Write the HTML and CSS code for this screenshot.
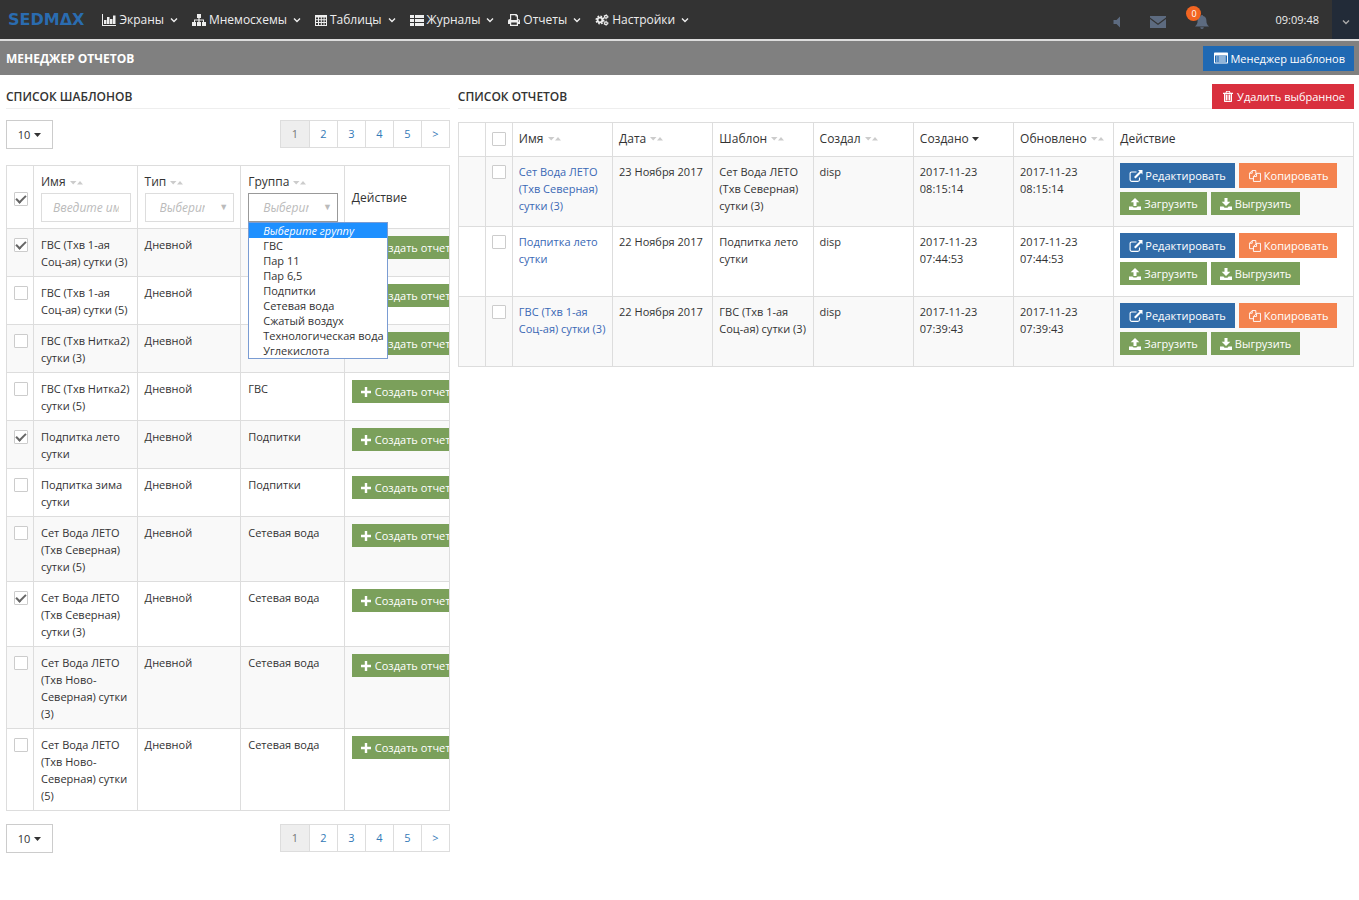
FILE: index.html
```html
<!DOCTYPE html>
<html lang="ru">
<head>
    <meta charset="UTF-8">
    <meta name="viewport" content="width=device-width, initial-scale=1.0">
    <title>SEDMAX - Менеджер отчетов</title>
    <link rel="stylesheet" href="styles.css">
</head>
<body>
    <!-- Icons -->
    <svg class="sprite" aria-hidden="true">
        <symbol id="i-chart" viewBox="0 0 14 12"><path d="M0 0h1v11h13v1H0zM2 6h2.500v4H2zM5 3h2.500v7H5zM8 5h2.500v5H8zM11 1.500h2.500V10H11z"/></symbol>
        <symbol id="i-tree" viewBox="0 0 14 12"><path d="M5 0h4v4H7.600v1.500H12V8h2v4h-4V8h1V6.500H7.600V8H9v4H5V8h1.400V6.500H3V8h1v4H0V8h2V5.500h4.400V4H5z"/></symbol>
        <symbol id="i-grid" viewBox="0 0 12 12"><path fill-rule="evenodd" d="M0 1h12v11H0zM1 3.500v1.800h2V3.500zM4 3.500v1.800h1.800V3.500zM6.800 3.500v1.800h1.800V3.500zM9.500 3.500v1.800H11V3.500zM1 6.200V8h2V6.200zM4 6.200V8h1.800V6.200zM6.800 6.200V8h1.800V6.200zM9.500 6.200V8H11V6.200zM1 9v2h2V9zM4 9v2h1.800V9zM6.800 9v2h1.800V9zM9.500 9v2H11V9z"/></symbol>
        <symbol id="i-list" viewBox="0 0 14 12"><path d="M0 1h4v3H0zM5 1h9v3H5zM0 5h4v3H0zM5 5h9v3H5zM0 9h4v3H0zM5 9h9v3H5z"/></symbol>
        <symbol id="i-print" viewBox="0 0 12 12"><path fill-rule="evenodd" d="M2 0h6.500L10 1.500V5c1.200 0 2 .8 2 2v3h-2v2H2v-2H0V7c0-1.200.8-2 2-2zM3.200 1.200V6h5.600V2.500H7.500V1.200zM3.200 8.500v2.300h5.600V8.500zM10 6.500v1h1v-1z"/></symbol>
        <symbol id="i-cogs" viewBox="0 0 14 13">
            <circle cx="4.800" cy="6.500" r="2.600" fill="none" stroke="currentColor" stroke-width="2"/>
            <circle cx="4.800" cy="6.500" r="4.100" fill="none" stroke="currentColor" stroke-width="1.600" stroke-dasharray="1.800 1.420"/>
            <circle cx="11.300" cy="3" r="1.500" fill="none" stroke="currentColor" stroke-width="1.400"/>
            <circle cx="11.300" cy="3" r="2.300" fill="none" stroke="currentColor" stroke-width=".8" stroke-dasharray="1.200"/>
            <circle cx="11.300" cy="10" r="1.500" fill="none" stroke="currentColor" stroke-width="1.400"/>
            <circle cx="11.300" cy="10" r="2.300" fill="none" stroke="currentColor" stroke-width=".8" stroke-dasharray="1.200"/>
        </symbol>
        <symbol id="i-down" viewBox="0 0 8 6"><path d="M1 1.500l3 3 3-3" fill="none" stroke="currentColor" stroke-width="1.400"/></symbol>
        <symbol id="i-volume" viewBox="0 0 8 12"><path d="M7 .5v11L3.500 8H.5V4h3z"/></symbol>
        <symbol id="i-mail" viewBox="0 0 16 12"><path d="M0 0h16v1.500L8 7.500 0 1.500zM0 3l8 6 8-6v9H0z"/></symbol>
        <symbol id="i-bell" viewBox="0 0 16 16"><path d="M8 0c.7 0 1.200.5 1.200 1.200C11.600 1.800 13 3.700 13 6c0 3.800 1 5.500 3 7H0c2-1.500 3-3.200 3-7 0-2.300 1.400-4.200 3.800-4.800C6.800.5 7.300 0 8 0zM6 14h4c0 1.200-.9 2-2 2s-2-.8-2-2z"/></symbol>
        <symbol id="i-card" viewBox="0 0 14 11"><path fill-rule="evenodd" d="M1 0h12c.6 0 1 .4 1 1v9c0 .6-.4 1-1 1H1c-.6 0-1-.4-1-1V1c0-.6.400-1 1-1zM1 3v7h12V3zM2.200 4h1.300v1H2.200zM4.500 4h7.300v1H4.500zM2.200 6h1.300v1H2.200zM4.500 6h7.300v1H4.500zM2.200 8h1.300v1H2.200zM4.500 8h7.300v1H4.500z"/></symbol>
        <symbol id="i-trash" viewBox="0 0 10 11"><path fill-rule="evenodd" d="M3.200 0h3.600l.7 1.700H10v1.200H9V10c0 .6-.4 1-1 1H2c-.6 0-1-.4-1-1V2.900H0V1.700h2.500zM3.900.8l-.4.900h3l-.4-.9zM2.400 3v7h5.200V3zM3 3.500h1v6H3zM4.500 3.500h1v6h-1zM6 3.500h1v6H6z"/></symbol>
        <symbol id="i-plus" viewBox="0 0 10 10"><path d="M3.800 0h2.400v3.800H10v2.400H6.200V10H3.800V6.200H0V3.800h3.800z"/></symbol>
        <symbol id="i-edit" viewBox="0 0 13 12"><path d="M7 2H2.200Q.6 2 .6 3.600v6.200q0 1.600 1.600 1.600h6.200q1.600 0 1.600-1.600V7.500" fill="none" stroke="currentColor" stroke-width="1.100"/><path d="M8.500 0H13v4.500l-1.500-1.500-5.500 5.500-1.500-1.500L10 1.500z"/></symbol>
        <symbol id="i-copy" viewBox="0 0 13 13"><path d="M3.500.6H7.400V4M3.500.6L.6 3.500v5.900h4.200M3.500.6v2.900H.6M8.200 3.600h4.200v8.800H4.800V7zM8.200 3.600V7H4.800" fill="none" stroke="currentColor" stroke-width="1"/></symbol>
        <symbol id="i-upload" viewBox="0 0 12 12"><path d="M6 0l4.300 4.300H7.500V8h-3V4.300H1.700zM0 8.500h3.500q.5 1 1.500 1h2q1 0 1.500-1H12V12H0z"/></symbol>
        <symbol id="i-download" viewBox="0 0 12 12"><path d="M4.500 0h3v3.700h2.800L6 8 1.700 3.700h2.800zM0 8.500h3.500q.5 1.200 1.500 1.200h2q1 0 1.500-1.200H12V12H0z"/></symbol>
        <symbol id="i-sort" viewBox="0 0 13 4"><path d="M0 0h6.500L3.200 3.500zM7 3.500L10 0l3 3.500z"/></symbol>
        <symbol id="i-caret" viewBox="0 0 7 4"><path d="M0 0h7L3.500 4z"/></symbol>
    </svg>

    <header class="navbar">
        <a class="logo" href="#">SEDMΔX</a>
        <nav class="menu">
            <a href="#"><svg class="icon wide"><use href="#i-chart"/></svg>Экраны<svg class="chevron"><use href="#i-down"/></svg></a>
            <a href="#"><svg class="icon wide"><use href="#i-tree"/></svg>Мнемосхемы<svg class="chevron"><use href="#i-down"/></svg></a>
            <a href="#"><svg class="icon"><use href="#i-grid"/></svg>Таблицы<svg class="chevron"><use href="#i-down"/></svg></a>
            <a href="#"><svg class="icon wide"><use href="#i-list"/></svg>Журналы<svg class="chevron"><use href="#i-down"/></svg></a>
            <a href="#"><svg class="icon"><use href="#i-print"/></svg>Отчеты<svg class="chevron"><use href="#i-down"/></svg></a>
            <a href="#"><svg class="icon wide"><use href="#i-cogs"/></svg>Настройки<svg class="chevron"><use href="#i-down"/></svg></a>
        </nav>
        <div class="tools">
            <button class="tool" aria-label="Звук"><svg class="volume"><use href="#i-volume"/></svg></button>
            <button class="tool" aria-label="Сообщения"><svg class="mail"><use href="#i-mail"/></svg></button>
            <button class="tool" aria-label="Уведомления"><svg class="bell"><use href="#i-bell"/></svg><span class="badge">0</span></button>
        </div>
        <time class="clock">09:09:48</time>
        <button class="user-menu" aria-label="Меню пользователя"><svg class="chevron"><use href="#i-down"/></svg></button>
    </header>

    <div class="page-bar">
        <h1>МЕНЕДЖЕР ОТЧЕТОВ</h1>
        <button class="btn btn-primary"><svg class="icon wide"><use href="#i-card"/></svg>Менеджер шаблонов</button>
    </div>

    <main class="content">
        <section class="templates">
            <div class="section-title">
                <h2>СПИСОК ШАБЛОНОВ</h2>
            </div>
            <div class="table-bar">
                <button class="page-size">10<svg class="caret"><use href="#i-caret"/></svg></button>
                <nav class="pager">
                    <a class="active" href="#">1</a><a href="#">2</a><a href="#">3</a><a href="#">4</a><a href="#">5</a><a href="#">&gt;</a>
                </nav>
            </div>

            <table class="grid templates-grid">
                <colgroup>
                    <col class="c-check"><col class="c-name"><col class="c-type"><col class="c-group"><col>
                </colgroup>
                <thead>
                    <tr>
                        <th><input type="checkbox" aria-label="Выбрать все" checked></th>
                        <th>
                            <label for="fName">Имя <svg class="sort"><use href="#i-sort"/></svg></label>
                            <input class="filter" type="text" id="fName" placeholder="Введите имя">
                        </th>
                        <th>
                            <label for="fType">Тип <svg class="sort"><use href="#i-sort"/></svg></label>
                            <div class="select">
                                <select class="filter" id="fType"><option>Выберите тип</option></select>
                            </div>
                        </th>
                        <th>
                            <label for="fGroup">Группа <svg class="sort"><use href="#i-sort"/></svg></label>
                            <div class="select open">
                                <select class="filter" id="fGroup"><option>Выберите группу</option></select>
                                <ul class="options">
                                    <li class="selected">Выберите группу</li>
                                    <li>ГВС</li>
                                    <li>Пар 11</li>
                                    <li>Пар 6,5</li>
                                    <li>Подпитки</li>
                                    <li>Сетевая вода</li>
                                    <li>Сжатый воздух</li>
                                    <li>Технологическая вода</li>
                                    <li>Углекислота</li>
                                </ul>
                            </div>
                        </th>
                        <th>Действие</th>
                    </tr>
                </thead>
                <tbody>
                    <tr>
                        <td><input type="checkbox" aria-label="Выбрать" checked></td>
                        <td>ГВС (Тхв 1-ая Соц-ая) сутки (3)</td><td>Дневной</td><td></td>
                        <td><button class="btn btn-success"><svg class="plus"><use href="#i-plus"/></svg>Создать отчет</button></td>
                    </tr>
                    <tr>
                        <td><input type="checkbox" aria-label="Выбрать"></td>
                        <td>ГВС (Тхв 1-ая Соц-ая) сутки (5)</td><td>Дневной</td><td></td>
                        <td><button class="btn btn-success"><svg class="plus"><use href="#i-plus"/></svg>Создать отчет</button></td>
                    </tr>
                    <tr>
                        <td><input type="checkbox" aria-label="Выбрать"></td>
                        <td>ГВС (Тхв Нитка2) сутки (3)</td><td>Дневной</td><td></td>
                        <td><button class="btn btn-success"><svg class="plus"><use href="#i-plus"/></svg>Создать отчет</button></td>
                    </tr>
                    <tr>
                        <td><input type="checkbox" aria-label="Выбрать"></td>
                        <td>ГВС (Тхв Нитка2) сутки (5)</td><td>Дневной</td><td>ГВС</td>
                        <td><button class="btn btn-success"><svg class="plus"><use href="#i-plus"/></svg>Создать отчет</button></td>
                    </tr>
                    <tr>
                        <td><input type="checkbox" aria-label="Выбрать" checked></td>
                        <td>Подпитка лето сутки</td><td>Дневной</td><td>Подпитки</td>
                        <td><button class="btn btn-success"><svg class="plus"><use href="#i-plus"/></svg>Создать отчет</button></td>
                    </tr>
                    <tr>
                        <td><input type="checkbox" aria-label="Выбрать"></td>
                        <td>Подпитка зима сутки</td><td>Дневной</td><td>Подпитки</td>
                        <td><button class="btn btn-success"><svg class="plus"><use href="#i-plus"/></svg>Создать отчет</button></td>
                    </tr>
                    <tr>
                        <td><input type="checkbox" aria-label="Выбрать"></td>
                        <td>Сет Вода ЛЕТО (Тхв Северная) сутки (5)</td><td>Дневной</td><td>Сетевая вода</td>
                        <td><button class="btn btn-success"><svg class="plus"><use href="#i-plus"/></svg>Создать отчет</button></td>
                    </tr>
                    <tr>
                        <td><input type="checkbox" aria-label="Выбрать" checked></td>
                        <td>Сет Вода ЛЕТО (Тхв Северная) сутки (3)</td><td>Дневной</td><td>Сетевая вода</td>
                        <td><button class="btn btn-success"><svg class="plus"><use href="#i-plus"/></svg>Создать отчет</button></td>
                    </tr>
                    <tr>
                        <td><input type="checkbox" aria-label="Выбрать"></td>
                        <td>Сет Вода ЛЕТО (Тхв Ново-Северная) сутки (3)</td><td>Дневной</td><td>Сетевая вода</td>
                        <td><button class="btn btn-success"><svg class="plus"><use href="#i-plus"/></svg>Создать отчет</button></td>
                    </tr>
                    <tr>
                        <td><input type="checkbox" aria-label="Выбрать"></td>
                        <td>Сет Вода ЛЕТО (Тхв Ново-Северная) сутки (5)</td><td>Дневной</td><td>Сетевая вода</td>
                        <td><button class="btn btn-success"><svg class="plus"><use href="#i-plus"/></svg>Создать отчет</button></td>
                    </tr>
                </tbody>
            </table>

            <div class="table-bar bottom">
                <button class="page-size">10<svg class="caret"><use href="#i-caret"/></svg></button>
                <nav class="pager">
                    <a class="active" href="#">1</a><a href="#">2</a><a href="#">3</a><a href="#">4</a><a href="#">5</a><a href="#">&gt;</a>
                </nav>
            </div>
        </section>

        <section class="reports">
            <div class="section-title">
                <h2>СПИСОК ОТЧЕТОВ</h2>
                <button class="btn btn-danger"><svg class="trash"><use href="#i-trash"/></svg>Удалить выбранное</button>
            </div>

            <table class="grid reports-grid">
                <colgroup>
                    <col class="c-check"><col class="c-check"><col class="c-data"><col class="c-data"><col class="c-data"><col class="c-data"><col class="c-data"><col class="c-data"><col>
                </colgroup>
                <thead>
                    <tr>
                        <th></th>
                        <th><input type="checkbox" aria-label="Выбрать все"></th>
                        <th>Имя <svg class="sort"><use href="#i-sort"/></svg></th>
                        <th>Дата <svg class="sort"><use href="#i-sort"/></svg></th>
                        <th>Шаблон <svg class="sort"><use href="#i-sort"/></svg></th>
                        <th>Создал <svg class="sort"><use href="#i-sort"/></svg></th>
                        <th>Создано <svg class="caret"><use href="#i-caret"/></svg></th>
                        <th>Обновлено <svg class="sort"><use href="#i-sort"/></svg></th>
                        <th>Действие</th>
                    </tr>
                </thead>
                <tbody>
                    <tr>
                        <td></td>
                        <td><input type="checkbox" aria-label="Выбрать"></td>
                        <td><a href="#">Сет Вода ЛЕТО (Тхв Северная) сутки (3)</a></td>
                        <td>23 Ноября 2017</td>
                        <td>Сет Вода ЛЕТО (Тхв Северная) сутки (3)</td>
                        <td>disp</td>
                        <td>2017-11-23 08:15:14</td>
                        <td>2017-11-23 08:15:14</td>
                        <td>
                            <div class="actions">
                                <button class="btn btn-edit"><svg class="icon wide"><use href="#i-edit"/></svg>Редактировать</button>
                                <button class="btn btn-copy"><svg class="icon wide"><use href="#i-copy"/></svg>Копировать</button>
                            </div>
                            <div class="actions">
                                <button class="btn btn-success"><svg class="icon"><use href="#i-upload"/></svg>Загрузить</button>
                                <button class="btn btn-success"><svg class="icon"><use href="#i-download"/></svg>Выгрузить</button>
                            </div>
                        </td>
                    </tr>
                    <tr>
                        <td></td>
                        <td><input type="checkbox" aria-label="Выбрать"></td>
                        <td><a href="#">Подпитка лето сутки</a></td>
                        <td>22 Ноября 2017</td>
                        <td>Подпитка лето сутки</td>
                        <td>disp</td>
                        <td>2017-11-23 07:44:53</td>
                        <td>2017-11-23 07:44:53</td>
                        <td>
                            <div class="actions">
                                <button class="btn btn-edit"><svg class="icon wide"><use href="#i-edit"/></svg>Редактировать</button>
                                <button class="btn btn-copy"><svg class="icon wide"><use href="#i-copy"/></svg>Копировать</button>
                            </div>
                            <div class="actions">
                                <button class="btn btn-success"><svg class="icon"><use href="#i-upload"/></svg>Загрузить</button>
                                <button class="btn btn-success"><svg class="icon"><use href="#i-download"/></svg>Выгрузить</button>
                            </div>
                        </td>
                    </tr>
                    <tr>
                        <td></td>
                        <td><input type="checkbox" aria-label="Выбрать"></td>
                        <td><a href="#">ГВС (Тхв 1-ая Соц-ая) сутки (3)</a></td>
                        <td>22 Ноября 2017</td>
                        <td>ГВС (Тхв 1-ая Соц-ая) сутки (3)</td>
                        <td>disp</td>
                        <td>2017-11-23 07:39:43</td>
                        <td>2017-11-23 07:39:43</td>
                        <td>
                            <div class="actions">
                                <button class="btn btn-edit"><svg class="icon wide"><use href="#i-edit"/></svg>Редактировать</button>
                                <button class="btn btn-copy"><svg class="icon wide"><use href="#i-copy"/></svg>Копировать</button>
                            </div>
                            <div class="actions">
                                <button class="btn btn-success"><svg class="icon"><use href="#i-upload"/></svg>Загрузить</button>
                                <button class="btn btn-success"><svg class="icon"><use href="#i-download"/></svg>Выгрузить</button>
                            </div>
                        </td>
                    </tr>
                </tbody>
            </table>
        </section>
    </main>
</body>
</html>
```

FILE: styles.css
```css
:root {
    --border: #ddd;
    --blue: #1f69b3;
    --green: #7ba05b;
}

* {
    margin: 0;
    padding: 0;
    box-sizing: border-box;
}

body {
    font-family: 'Open Sans', 'Noto Sans', sans-serif;
    font-size: 11px;
    line-height: 17px;
    color: #333;
    background: #fff;
}

button,
input,
select {
    font: inherit;
    color: inherit;
    border: 0;
    border-radius: 0;
    background: none;
}

a {
    color: #3a68b5;
    text-decoration: none;
}

svg {
    fill: currentColor;
    flex: none;
}

.sprite {
    display: none;
}

.icon {
    width: 12px;
    height: 12px;
}

.icon.wide {
    width: 14px;
}

.chevron {
    width: 8px;
    height: 6px;
}

.caret {
    width: 7px;
    height: 4px;
    vertical-align: middle;
}

.sort {
    width: 13px;
    height: 4px;
    margin-left: 1px;
    color: #ccc;
    vertical-align: middle;
}

/* Top navigation */
.navbar {
    display: flex;
    align-items: center;
    height: 41px;
    background: #333;
    border-bottom: 2px solid #ddd;
    color: #eee;
    font-size: 12px;
}

.logo {
    padding-left: 8px;
    font-family: 'DejaVu Sans', sans-serif;
    font-size: 16px;
    font-weight: bold;
    color: #2a6cb0;
}

.menu {
    display: flex;
    gap: 14px;
    margin-left: 18px;
}

.menu a {
    display: flex;
    align-items: center;
    gap: 3px;
    color: #eee;
}

.menu .chevron {
    margin-left: 3px;
}

.tools {
    display: flex;
    align-items: center;
    gap: 29px;
    margin-left: auto;
    padding-top: 4px;
    color: #5d6b80;
}

.tool {
    position: relative;
    display: flex;
}

.volume {
    width: 8px;
    height: 12px;
}

.mail {
    width: 16px;
    height: 12px;
}

.bell {
    width: 14px;
    height: 14px;
}

.badge {
    position: absolute;
    top: -9px;
    left: -9px;
    width: 15px;
    height: 15px;
    border-radius: 50%;
    background: #f26522;
    color: #fff;
    font-size: 9px;
    line-height: 15px;
    text-align: center;
}

.clock {
    margin: 0 13px 0 66px;
    font-size: 11px;
}

.user-menu {
    display: flex;
    align-items: center;
    justify-content: center;
    align-self: stretch;
    width: 27px;
    padding-top: 4px;
    background: #222b38;
    color: #aaa;
}

/* Page title */
.page-bar {
    display: flex;
    align-items: center;
    justify-content: space-between;
    height: 34px;
    padding: 0 5px 0 6px;
    background: #808080;
    color: #fff;
}

h1,
h2 {
    font-size: 12px;
    font-weight: 600;
}

h1 {
    font-weight: 700;
}

.content {
    display: grid;
    grid-template-columns: calc(33% - 1px) 1fr;
    gap: 8px;
    padding: 9px 5px 24px 6px;
}

.section-title {
    display: flex;
    align-items: center;
    justify-content: space-between;
    height: 25px;
    margin-bottom: 11px;
    border-bottom: 1px solid #eee;
}

/* Buttons */
.btn {
    display: flex;
    align-items: center;
    gap: 2px;
    height: 25px;
    padding: 0 9px;
    color: #fff;
    white-space: nowrap;
    cursor: pointer;
}

.btn-primary {
    padding-left: 11px;
    background: var(--blue);
}

.btn-danger {
    gap: 4px;
    padding-left: 11px;
    background: #d9303e;
}

.btn-edit {
    background: #306ba8;
}

.btn-copy {
    background: #f4834f;
}

.btn-success {
    height: 23px;
    gap: 4px;
    background: var(--green);
}

.plus {
    width: 10px;
    height: 10px;
}

.trash {
    width: 10px;
    height: 11px;
}

.actions {
    display: flex;
    gap: 4px;
    margin-bottom: 4px;
}

.actions .btn-success {
    gap: 3px;
}

/* Page size and pager */
.table-bar {
    display: flex;
    justify-content: space-between;
    align-items: flex-start;
    margin-bottom: 16px;
}

.table-bar.bottom {
    margin: 13px 0 0;
}

.page-size {
    display: flex;
    align-items: center;
    justify-content: center;
    gap: 4px;
    width: 47px;
    height: 29px;
    border: 1px solid #ccc;
}

.pager {
    display: flex;
    border: 1px solid var(--border);
}

.pager a {
    width: 28px;
    line-height: 26px;
    text-align: center;
    color: #337ab7;
}

.pager a + a {
    border-left: 1px solid var(--border);
}

.pager .active {
    background: #eee;
    color: #777;
}

/* Tables */
.grid {
    width: 100%;
    table-layout: fixed;
    border-collapse: collapse;
}

.c-check {
    width: 27px;
}

.c-name,
.c-type,
.c-group {
    width: 23.4%;
}

.c-data {
    width: 11.2%;
}

.grid th,
.grid td {
    padding: 7px 6px 6px 7px;
    border: 1px solid var(--border);
    text-align: left;
    vertical-align: top;
}

.grid th {
    font-size: 12px;
    font-weight: normal;
    vertical-align: middle;
    white-space: nowrap;
}

.reports-grid {
    margin-top: 13px;
}

.reports .section-title {
    margin-bottom: 0;
}

.grid.reports-grid th {
    height: 34px;
    padding: 6px 4px 9px 6px;
}

.grid.reports-grid td {
    padding: 6px 4px 7px 6px;
}

.grid tbody tr:nth-child(odd) {
    background: #f9f9f9;
}

.templates-grid td:last-child {
    overflow: hidden;
}

.grid input[type="checkbox"] {
    appearance: none;
    display: grid;
    place-items: center;
    width: 14px;
    height: 14px;
    margin-top: 2px;
    border: 1px solid #ccc;
    border-radius: 1px;
    background: #fff;
}

.grid input[type="checkbox"]:checked::after {
    content: "";
    width: 8px;
    height: 4px;
    border-left: 2px solid #666;
    border-bottom: 2px solid #666;
    transform: translateY(-1px) rotate(-45deg);
}

.grid label {
    display: block;
    margin-bottom: 3px;
    line-height: 17px;
}

.filter {
    display: block;
    width: 100%;
    height: 29px;
    padding: 0 11px;
    border: 1px solid var(--border);
    color: #bbb;
    font-style: italic;
}

.filter::placeholder {
    color: #bbb;
}

.select {
    position: relative;
}

.select .filter {
    appearance: none;
    padding: 0 28px 0 14px;
}

.select::after {
    content: "▼";
    position: absolute;
    top: 5px;
    right: 6px;
    color: #bbb;
    font-size: 9px;
    pointer-events: none;
}

.select.open .filter {
    border-color: #999;
}

.options {
    position: absolute;
    top: 29px;
    left: 0;
    z-index: 10;
    list-style: none;
    border: 1px solid #7a9cd3;
    background: #fff;
    font-size: 11px;
    line-height: 15px;
}

.options li {
    padding: 0 3px 0 14px;
}

.options .selected {
    background: #1e90ff;
    color: #fff;
    font-style: italic;
}
```
